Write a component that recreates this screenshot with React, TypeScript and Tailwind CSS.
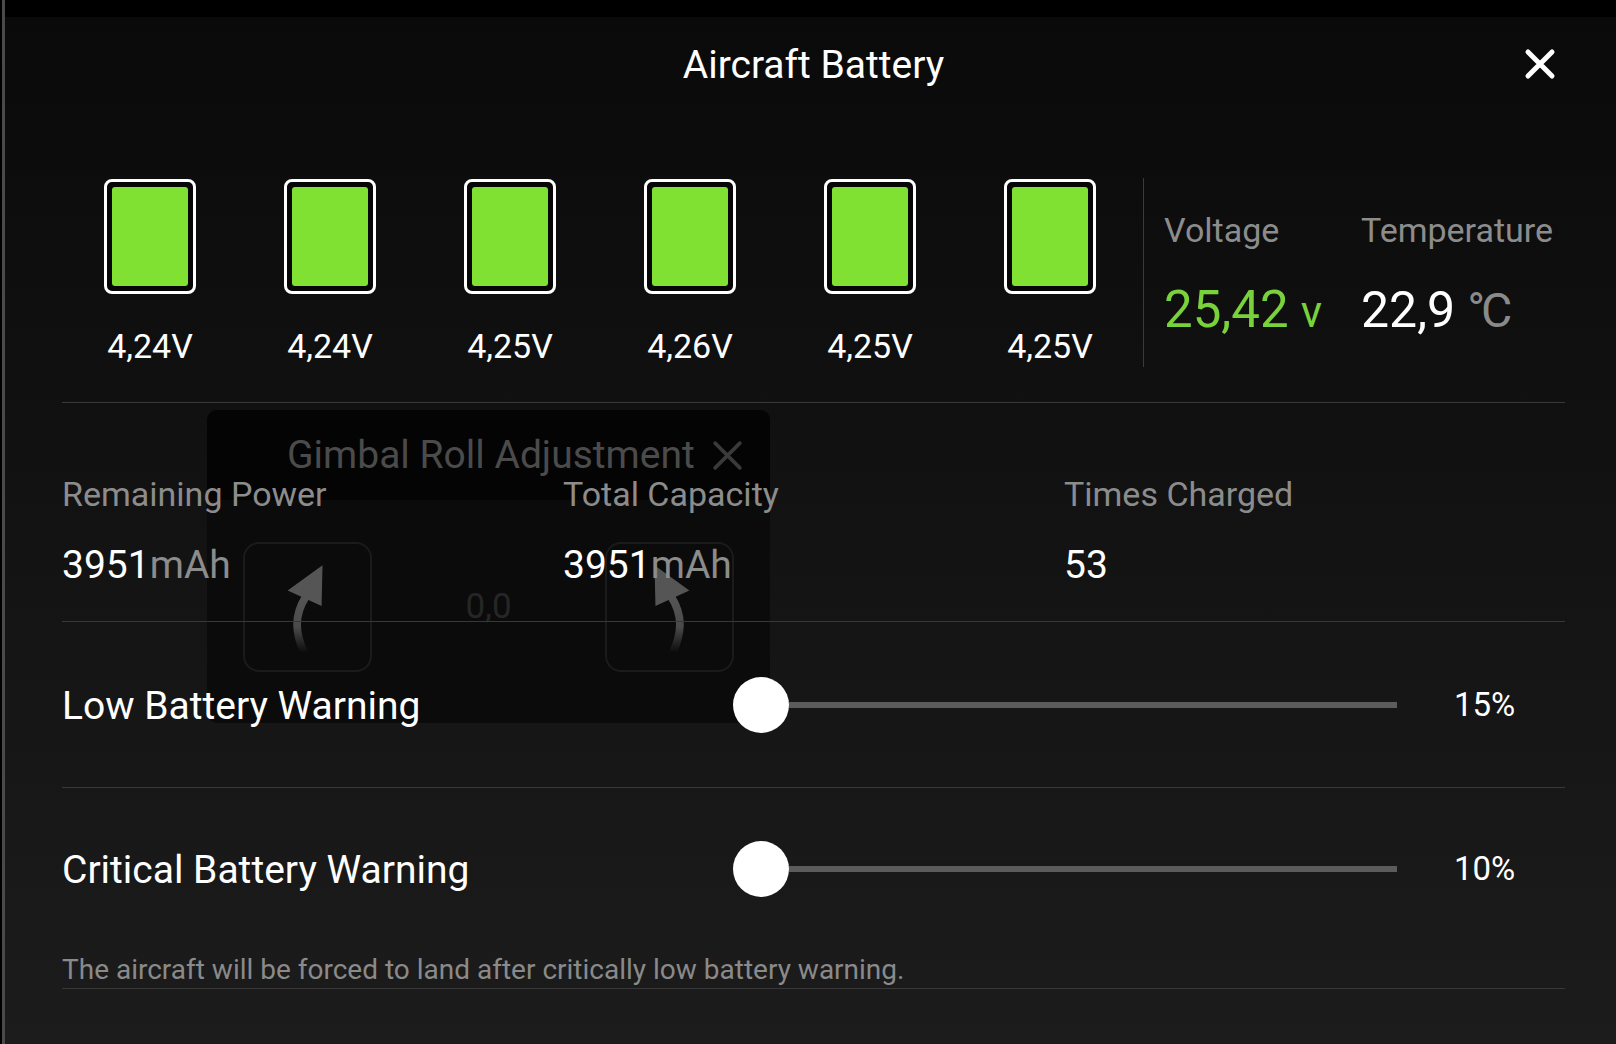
import React from "react";

const cells = ["4,24V", "4,24V", "4,25V", "4,26V", "4,25V", "4,25V"];

const CloseIcon = ({ color, size, stroke }: { color: string; size: number; stroke: number }) => (
    <svg width={size} height={size} viewBox="0 0 32 32">
        <path d="M4 4 L28 28 M28 4 L4 28" stroke={color} strokeWidth={stroke} strokeLinecap="round" fill="none" />
    </svg>
);

const CurvedArrow = ({ flip, id }: { flip?: boolean; id: string }) => (
    <svg width="125" height="126" viewBox="0 0 129 130" className={flip ? "-scale-x-100" : ""}>
        <defs>
            <linearGradient id={id} x1="0" y1="0" x2="0" y2="1">
                <stop offset="0" stopColor="#555" />
                <stop offset="0.55" stopColor="#4a4a4a" />
                <stop offset="1" stopColor="#4a4a4a" stopOpacity="0" />
            </linearGradient>
        </defs>
        <path d="M61 112 C 52 92, 50 74, 63 54" stroke={`url(#${id})`} strokeWidth="8" strokeLinecap="round" fill="none" />
        <polygon points="80,22 44,48 79,64" fill="#555" />
    </svg>
);

const Slider = ({ value }: { value: string }) => (
    <>
        <div className="flex items-center w-[664px]">
            <div className="w-[56px] h-[56px] rounded-full bg-white shrink-0" />
            <div className="flex-1 h-[6px] bg-[#5c5c5c]" />
        </div>
        <div className="ml-[57px] text-[33px] leading-[40px] text-white">{value}</div>
    </>
);

// ghost of the gimbal dialog that shows through the battery page
const GimbalGhost = () => (
    <div className="absolute left-[202px] top-[393px] w-[563px] h-[313px] rounded-[10px] overflow-hidden bg-[#0b0b0b]">
        <div className="h-[90px] bg-[#040404] flex items-center pl-[80px] gap-[16px]">
            <span className="text-[39px] leading-[46px] text-[#4b4b4b]">Gimbal Roll Adjustment</span>
            <CloseIcon color="#3a3a3a" size={33} stroke={3.5} />
        </div>
        <div className="flex items-center justify-between px-[36px] pt-[42px]">
            <div className="w-[129px] h-[130px] rounded-[16px] border-2 border-[#1b1b1b] flex items-center justify-center">
                <CurvedArrow id="ga" />
            </div>
            <div className="text-[35px] leading-[40px] text-[#262626]">0,0</div>
            <div className="w-[129px] h-[130px] rounded-[16px] border-2 border-[#1b1b1b] flex items-center justify-center">
                <CurvedArrow id="gb" flip />
            </div>
        </div>
    </div>
);

export default function App() {
    return (
        <div className="w-[1616px] h-[1044px] bg-black flex overflow-hidden" style={{ fontFamily: "Roboto, 'Liberation Sans', sans-serif" }}>
            <div className="w-[2px]" />
            <div className="w-[3px] bg-[#4a4a4a]" />
            <div className="flex-1 flex flex-col">
                <div className="h-[17px] bg-black" />
                <div className="flex-1 relative bg-gradient-to-b from-[#0a0a0a] to-[#1c1c1c] pl-[57px] pr-[51px]">
                    <GimbalGhost />
                    <div className="absolute right-[60px] top-[31px]">
                        <CloseIcon color="#ffffff" size={32} stroke={5} />
                    </div>

                    <div className="relative z-10">
                        <div className="h-[96px] flex items-center justify-center">
                            <h1 className="text-[39px] leading-[46px] text-white">Aircraft Battery</h1>
                        </div>

                        {/* cells + totals */}
                        <div className="pt-[65px] pb-[35px] border-b border-[#383838]">
                            <div className="flex h-[189px] -ml-[2px]">
                                {cells.map((v, i) => (
                                    <div key={i} className="w-[180px] flex flex-col items-center pt-[1px]">
                                        <div className="w-[92px] h-[115px] border-[3px] border-white rounded-[8px] p-[5px] bg-[#060606]">
                                            <div className="w-full h-full rounded-[3px] bg-[#80e132]" />
                                        </div>
                                        <div className="mt-[32px] text-[34px] leading-[40px] text-white">{v}</div>
                                    </div>
                                ))}
                                <div className="ml-[3px] w-px h-[189px] bg-[#3a3a3a]" />
                                <div className="ml-[20px] pt-[32px] flex">
                                    <div className="w-[197px]">
                                        <div className="text-[34px] leading-[40px] text-[#8c8c8c]">Voltage</div>
                                        <div className="mt-[30px] leading-[60px] text-[#79d23c] whitespace-nowrap">
                                            <span className="text-[51px]">25,42</span>
                                            <span className="text-[44px] ml-[12px]">v</span>
                                        </div>
                                    </div>
                                    <div>
                                        <div className="text-[34px] leading-[40px] text-[#8c8c8c]">Temperature</div>
                                        <div className="mt-[30px] leading-[60px] whitespace-nowrap">
                                            <span className="text-[50px] text-white">22,9</span>
                                            <span className="text-[48px] ml-[12px] tracking-[-4px] text-[#8a8a8a]">°C</span>
                                        </div>
                                    </div>
                                </div>
                            </div>
                        </div>

                        {/* capacity info */}
                        <div className="grid grid-cols-3 pt-[72px] pb-[34px] border-b border-[#383838]">
                            <div>
                                <div className="text-[34px] leading-[38px] text-[#8c8c8c]">Remaining Power</div>
                                <div className="mt-[30px] text-[39px] leading-[44px]">
                                    <span className="text-white">3951</span>
                                    <span className="text-[#8c8c8c]">mAh</span>
                                </div>
                            </div>
                            <div>
                                <div className="text-[34px] leading-[38px] text-[#8c8c8c]">Total Capacity</div>
                                <div className="mt-[30px] text-[39px] leading-[44px]">
                                    <span className="text-white">3951</span>
                                    <span className="text-[#8c8c8c]">mAh</span>
                                </div>
                            </div>
                            <div>
                                <div className="text-[34px] leading-[38px] text-[#8c8c8c]">Times Charged</div>
                                <div className="mt-[30px] text-[39px] leading-[44px] text-white">53</div>
                            </div>
                        </div>

                        <div className="h-[166px] flex items-center border-b border-[#383838]">
                            <div className="w-[671px] pt-[3px] text-[39px] leading-[44px] text-white">Low Battery Warning</div>
                            <Slider value="15%" />
                        </div>

                        <div className="pb-[3px] border-b border-[#383838]">
                            <div className="h-[161px] flex items-center">
                                <div className="w-[671px] pt-[3px] text-[39px] leading-[44px] text-white">Critical Battery Warning</div>
                                <Slider value="10%" />
                            </div>
                            <div className="mt-[6px] text-[28px] leading-[30px] text-[#8a8a8a]">
                                The aircraft will be forced to land after critically low battery warning.
                            </div>
                        </div>
                    </div>
                </div>
            </div>
        </div>
    );
}
